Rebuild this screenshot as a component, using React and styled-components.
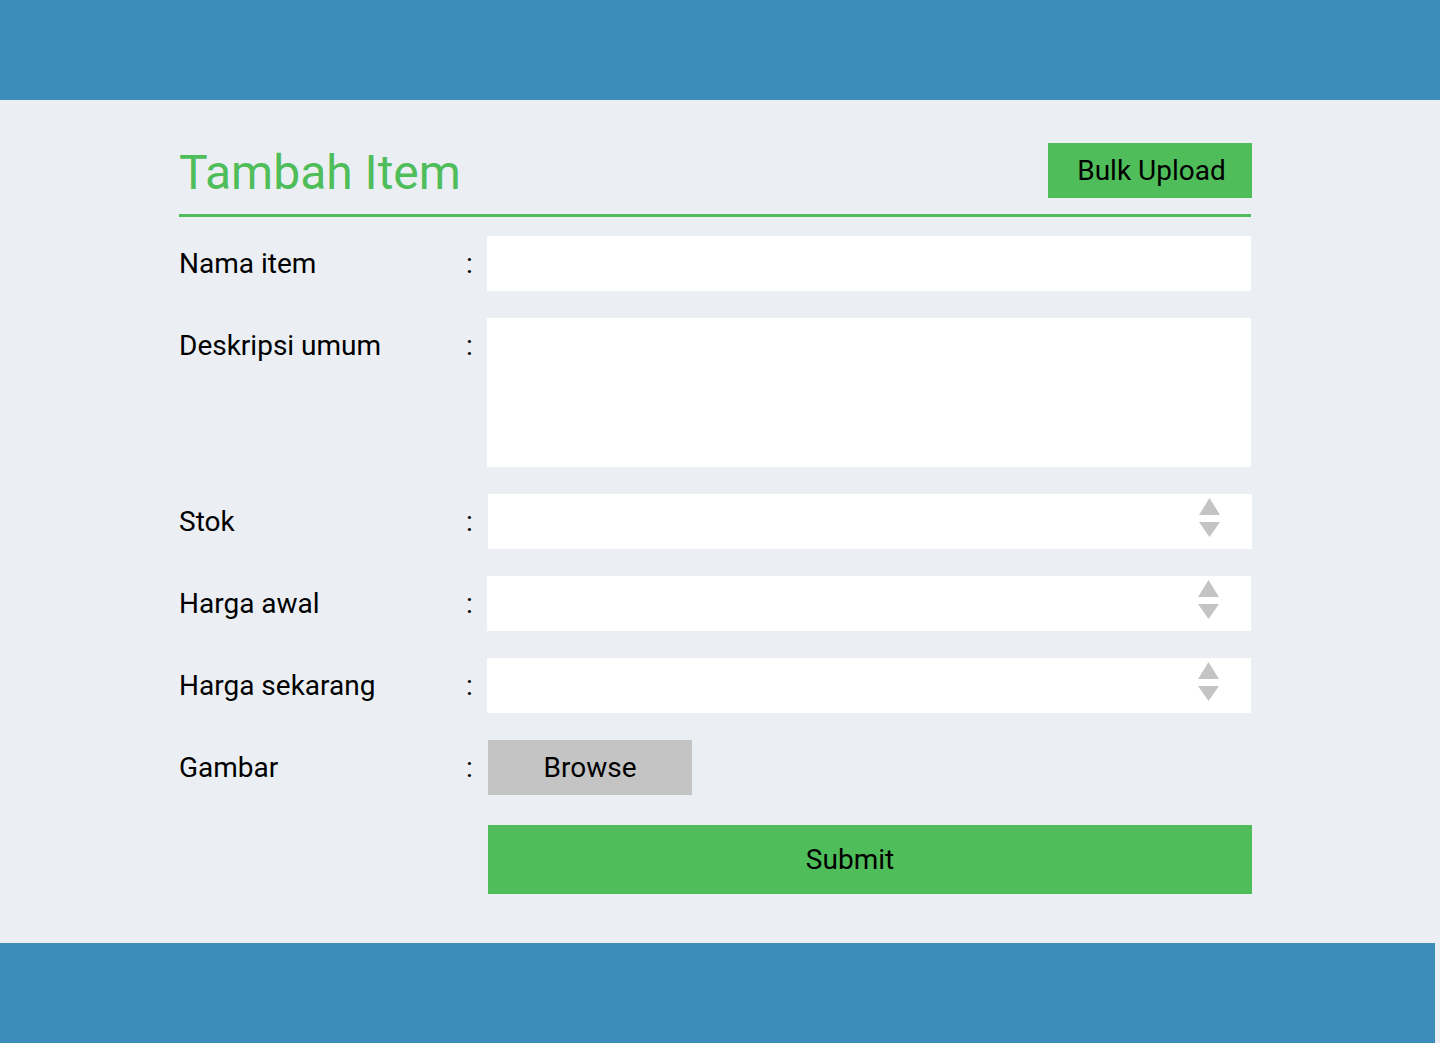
import React from 'react';
import styled, { createGlobalStyle } from 'styled-components';

const GlobalStyle = createGlobalStyle`
    * { box-sizing: border-box; }
    body {
        margin: 0;
        background: #ebeff4;
        font-family: Roboto, 'Noto Sans', sans-serif;
        color: #000;
    }
`;

const Page = styled.div`
    width: 1440px;
    min-height: 1043px;
    display: flex;
    flex-direction: column;
`;

const TopBar = styled.header`
    height: 100px;
    background: #3d8dbb;
`;

const BottomBar = styled.footer`
    height: 100px;
    width: 1435px;
    background: #3d8dbb;
`;

const Main = styled.main`
    flex: 1;
    padding: 43px 189px 0 179px;
`;

const Header = styled.div`
    display: flex;
    justify-content: space-between;
    align-items: flex-start;
    height: 74px;
    border-bottom: 3px solid #4fbd5a;
`;

const Title = styled.h1`
    margin: 0;
    font-weight: 400;
    font-size: 48px;
    color: #4fbd5a;
    line-height: 48px;
    padding-top: 6px;
`;

const GreenButton = styled.button`
    border: none;
    background: #4fbd5a;
    color: #000;
    font-family: inherit;
    font-size: 28px;
    width: ${(p) => (p.wide ? '764px' : '204px')};
    height: ${(p) => (p.wide ? '69px' : '55px')};
    padding: ${(p) => (p.wide ? '0 40px 0 0' : '0 0 0 3px')};
    margin-right: -1px;
`;

const Form = styled.form`
    display: grid;
    grid-template-columns: 287px 21px 1fr;
    row-gap: 27px;
    margin-top: 19px;
`;

const Label = styled.label`
    font-size: 28px;
    line-height: 55px;
`;

const Colon = styled.span`
    font-size: 28px;
    line-height: 55px;
`;

const Field = styled.div`
    position: relative;
    background: #fff;
    height: ${(p) => p.h || 55}px;
    margin-left: ${(p) => (p.shift ? 1 : 0)}px;
    margin-right: ${(p) => (p.shift ? -1 : 0)}px;
`;

const Spinner = styled.div`
    position: absolute;
    right: 32px;
    top: 4px;
    display: flex;
    flex-direction: column;
    gap: 7px;
`;

const Browse = styled.button`
    border: none;
    background: #c4c4c4;
    font-family: inherit;
    font-size: 28px;
    color: #000;
    width: 204px;
    height: 55px;
    padding: 0;
    margin-left: 1px;
`;

const SubmitRow = styled.div`
    grid-column: 3;
    margin-left: 1px;
    margin-top: 3px;
`;

const Arrows = () => (
    <Spinner>
        <svg width="21" height="17" viewBox="0 0 21 17">
            <polygon points="10.5,0 21,17 0,17" fill="#c4c4c4" />
        </svg>
        <svg width="21" height="15" viewBox="0 0 21 15">
            <polygon points="0,0 21,0 10.5,15" fill="#c4c4c4" />
        </svg>
    </Spinner>
);

const rows = [
    { label: 'Nama item' },
    { label: 'Deskripsi umum', h: 149 },
    { label: 'Stok', number: true, shift: true },
    { label: 'Harga awal', number: true },
    { label: 'Harga sekarang', number: true },
];

const App = () => (
    <Page>
        <GlobalStyle />
        <TopBar />
        <Main>
            <Header>
                <Title>Tambah Item</Title>
                <GreenButton type="button">Bulk Upload</GreenButton>
            </Header>
            <Form onSubmit={(e) => e.preventDefault()}>
                {rows.map((r) => (
                    <React.Fragment key={r.label}>
                        <Label>{r.label}</Label>
                        <Colon>:</Colon>
                        <Field h={r.h} shift={r.shift}>
                            {r.number && <Arrows />}
                        </Field>
                    </React.Fragment>
                ))}
                <Label>Gambar</Label>
                <Colon>:</Colon>
                <div>
                    <Browse type="button">Browse</Browse>
                </div>
                <SubmitRow>
                    <GreenButton type="submit" wide>
                        Submit
                    </GreenButton>
                </SubmitRow>
            </Form>
        </Main>
        <BottomBar />
    </Page>
);

export default App;
